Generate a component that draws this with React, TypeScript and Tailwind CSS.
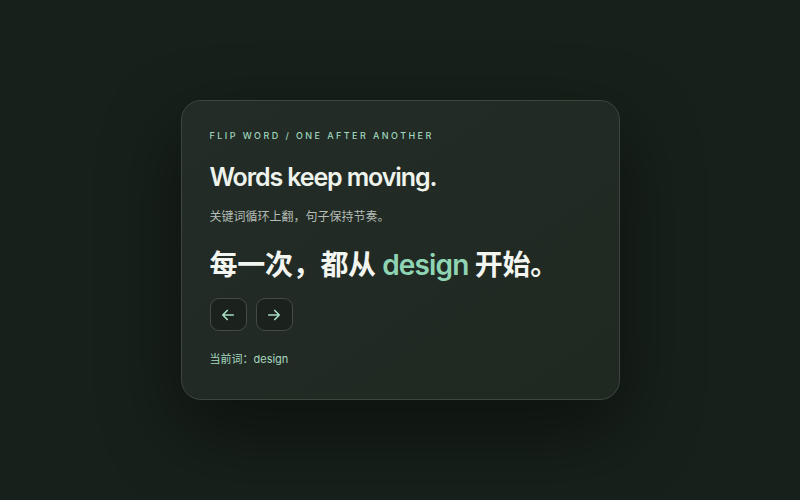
import { useState } from "react";

const words = ["design", "motion", "rhythm", "story"];

export default function App() {
  const [index, setIndex] = useState(0);
  const word = words[index];

  const prev = () => setIndex((i) => (i - 1 + words.length) % words.length);
  const next = () => setIndex((i) => (i + 1) % words.length);

  return (
    <div
      className="min-h-screen w-full flex items-center justify-center bg-[#17201a]"
      style={{ fontFamily: 'Inter, "Noto Sans CJK SC", sans-serif' }}
    >
      <div className="w-[439px] h-[300px] rounded-[20px] border border-[#3a463e] bg-gradient-to-br from-[#232c26] to-[#202822] px-[28px] pt-[28px] shadow-[0_30px_80px_rgba(0,0,0,0.45)]">
        <p className="text-[9px] font-medium tracking-[0.27em] text-[#9fd6bd] leading-[14px]">
          FLIP WORD / ONE AFTER ANOTHER
        </p>
        <h1 className="mt-[18px] text-[25px] font-semibold tracking-[-0.045em] text-[#eef3ec] leading-[32px]">
          Words keep moving.
        </h1>
        <p className="mt-[16px] text-[12px] text-[#b3bcb5] leading-[16px]">
          关键词循环上翻，句子保持节奏。
        </p>
        <p className="mt-[22px] text-[28px] font-bold text-[#f2f5f0] leading-[36px] tracking-[-0.01em]">
          每一次，都从 <span className="font-semibold text-[#8fd5b4] tracking-[-0.03em]">{word}</span> 开始。
        </p>
        <div className="mt-[15px] flex gap-[9px]">
          <button
            onClick={prev}
            className="w-[37px] h-[33px] rounded-[9px] border border-[#414c44] bg-[#1b221d] flex items-center justify-center text-[#a6dcc3]"
          >
            <svg width="18" height="18" viewBox="0 0 24 24" fill="none" stroke="currentColor" strokeWidth="2.2" strokeLinecap="round" strokeLinejoin="round">
              <path d="M19 12H5M11 6l-6 6 6 6" />
            </svg>
          </button>
          <button
            onClick={next}
            className="w-[37px] h-[33px] rounded-[9px] border border-[#414c44] bg-[#1b221d] flex items-center justify-center text-[#a6dcc3]"
          >
            <svg width="18" height="18" viewBox="0 0 24 24" fill="none" stroke="currentColor" strokeWidth="2.2" strokeLinecap="round" strokeLinejoin="round">
              <path d="M5 12h14M13 6l6 6-6 6" />
            </svg>
          </button>
        </div>
        <p className="mt-[20px] text-[11px] text-[#a8d9c1] leading-[16px]">当前词：{word}</p>
      </div>
    </div>
  );
}
